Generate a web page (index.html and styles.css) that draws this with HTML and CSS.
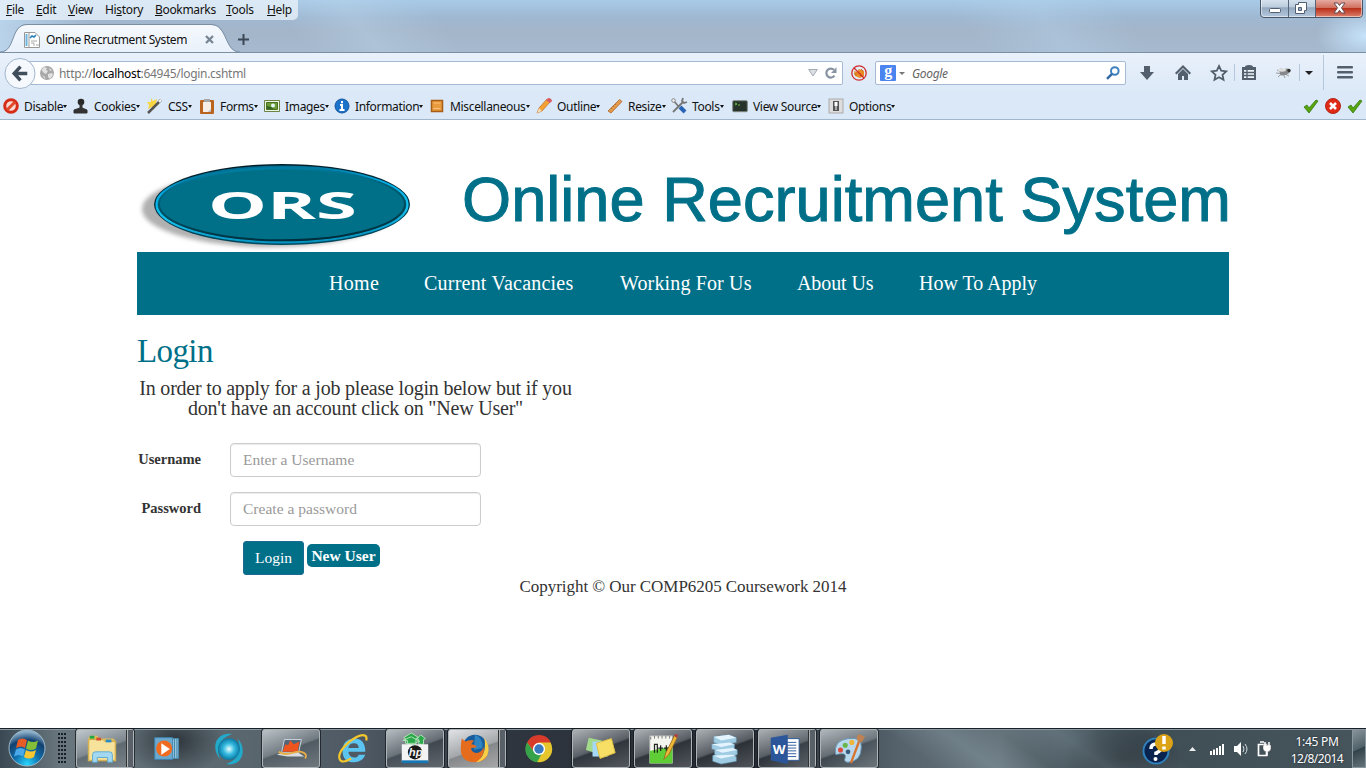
FILE: index.html
```
<!DOCTYPE html>
<html lang="en">
<head>
<meta charset="utf-8">
<title>Online Recrutment System</title>
<link rel="stylesheet" href="styles.css">
</head>
<body>
<div class="screen">
<header class="browser">
  <div class="titlebar">
    <div class="menubar">
      <span class="m1"><u>F</u>ile</span><span class="m2"><u>E</u>dit</span><span class="m3"><u>V</u>iew</span><span class="m4">Hi<u>s</u>tory</span><span class="m5"><u>B</u>ookmarks</span><span class="m6"><u>T</u>ools</span><span class="m7"><u>H</u>elp</span>
    </div>
    <svg class="winctl" width="104" height="20" viewBox="0 0 104 20">
      <defs>
        <linearGradient id="wg" x2="0" y2="1"><stop offset="0" stop-color="#dce8f3"/><stop offset=".45" stop-color="#bdcddd"/><stop offset=".5" stop-color="#94a9bf"/><stop offset="1" stop-color="#b5cadf"/></linearGradient>
        <linearGradient id="wr" x2="0" y2="1"><stop offset="0" stop-color="#e5aaa0"/><stop offset=".45" stop-color="#d1705f"/><stop offset=".5" stop-color="#b9301b"/><stop offset="1" stop-color="#dc806b"/></linearGradient>
      </defs>
      <path d="M.5 -2V14Q.5 17.500 4 17.500H99Q102.500 17.500 102.500 14V-2z" fill="url(#wg)" stroke="#475669"/>
      <path d="M56 0H102V14Q102 17 99 17H56z" fill="url(#wr)"/>
      <path d="M1.500 0V13Q1.500 16.500 4 16.500H99Q101.500 16.500 101.500 13V0" fill="none" stroke="#fff" opacity=".5"/>
      <path d="M28.500 0V17M55.500 0V17" stroke="#56657a"/>
      <rect x="9.500" y="8.500" width="11" height="4" rx="1" fill="#fff" stroke="#525f70"/>
      <path d="M38.500 2.500H46.500V10.500H44.500V13.500H35.500V4.500H38.500zM38.500 7.500V10.500H41.500V7.500z" fill="#fff" fill-rule="evenodd" stroke="#525f70"/>
      <path d="M74 3h3.500l2 2.500 2-2.500H85l-3.500 4.800L85 13h-3.500l-2-2.700-2 2.700H74l3.500-5.200z" fill="#fff" stroke="#5f4b52"/>
    </svg>
    <div class="tabstrip">
      <svg class="tabshape" width="240" height="29" viewBox="0 0 240 29">
        <defs><linearGradient id="tg" x2="0" y2="1"><stop stop-color="#f5f9fd"/><stop offset="1" stop-color="#e8f0fa"/></linearGradient></defs>
        <path d="M0 28.500C16 28.500 10 1 27 1H211C228 1 224 28.500 240 28.500V29H0z" fill="url(#tg)"/>
        <path d="M0 28C16 28 10 .5 27 .5H211C228 .5 224 28 240 28" fill="none" stroke="#7a8ea4"/>
      </svg>
      <div class="tabrow">
        <svg width="16" height="16" viewBox="0 0 16 16"><path d="M.5 .5H11L15.500 5V15.500H.500z" fill="#fff" stroke="#999"/><path d="M2.500 2v12" stroke="#6cb4df" stroke-width="2"/><path d="M5 0v15" stroke="#999"/><path d="M6 6l2-2 2 1 2-2" stroke="#247bb6" stroke-width="1.500" fill="none"/><path d="M7 9h6M7 11h3v3M12 13h3" stroke="#aaa" fill="none"/></svg>
        <span class="tabtitle">Online Recrutment System</span>
        <svg class="tabx" width="9" height="9" viewBox="0 0 9 9"><path d="M1 1L8 8M8 1L1 8" stroke="#788593" stroke-width="2.300"/></svg>
        <svg class="plus" width="11" height="11" viewBox="0 0 11 11"><path d="M5.500 0V11M0 5.500H11" stroke="#3c4856" stroke-width="2"/></svg>
      </div>
    </div>
  </div>

  <div class="navtools">
    <svg class="back" width="32" height="33" viewBox="0 0 33 33"><circle cx="16.500" cy="16.500" r="15.500" fill="#f5f9fd" stroke="#9eb3c9"/><path d="M17 9.500L10.500 16.500L17 23.500M11 16.500H24" fill="none" stroke="#404d5a" stroke-width="3.500"/></svg>
    <div class="url">
      <svg class="globe" width="14" height="14" viewBox="0 0 14 14"><circle cx="7" cy="7" r="7" fill="#a8a8a8"/><path d="M1.500 4L4 1l3 1-1 2 2 1-2 3-2-1zM8 8l4-1 1 2-3 4-2-2zM9 2l3 2-2 1zM2 9l3 2v2" fill="#e2e2e2"/></svg>
      <span class="urltext">http://<b>localhost</b>:64945/login.cshtml</span>
      <svg class="drop" width="10" height="8" viewBox="0 0 10 8"><path d="M.7 .5H9.300L5 7z" fill="#dce0e5" stroke="#a1a9b3"/></svg>
      <svg class="reload" width="12" height="12" viewBox="0 0 12 12"><path d="M9.500 8.700A4.500 4.500 0 1 1 9 2.800" fill="none" stroke="#8793a1" stroke-width="2.200"/><path d="M11.500 .2V6H6z" fill="#8793a1"/></svg>
    </div>
    <svg class="bugoff" width="16" height="16" viewBox="0 0 16 16"><path d="M3 6l3 1 2-3 5 2v5l-4 2-5-2z" fill="#e98b20"/><path d="M3 9h3M10 4l2 2M9 10l3 2" stroke="#b8702c"/><circle cx="8" cy="8" r="7.200" fill="none" stroke="#d12c2c" stroke-width="1.300"/><path d="M3 3L13 13" stroke="#d12c2c" stroke-width="1.300"/></svg>
    <div class="search">
      <span class="gbox">g</span><i class="tri grey"></i><span class="google">Google</span>
      <svg width="14" height="14" viewBox="0 0 14 14"><circle cx="8.800" cy="5" r="3.800" fill="none" stroke="#3f80bf" stroke-width="2"/><path d="M6 7.800L1 12.800" stroke="#3168a6" stroke-width="2.500"/></svg>
    </div>
    <svg class="toolicons" width="227" height="38" viewBox="0 0 227 38">
      <g fill="#535f6c">
        <path d="M5 13h6v6h4l-7 8-7-8h4z"/>
        <path d="M36 20l8-8 8 8-1.500 1.500L44 15l-6.500 6.500z"/><path d="M39 21l5-5 5 5v6h-4v-4h-2v4h-4z"/>
        <path d="M103 14h3q0-2 4-2t4 2h3v13h-14z"/>
        <path d="M166 18h8l-4 4z" fill="#222"/>
        <rect x="198" y="13" width="16" height="2.600" rx="1"/><rect x="198" y="18" width="16" height="2.600" rx="1"/><rect x="198" y="23" width="16" height="2.600" rx="1"/>
      </g>
      <path d="M80 13l2.200 4.700 5 .6-3.700 3.500 1 5-4.500-2.500-4.500 2.500 1-5-3.700-3.500 5-.6z" fill="none" stroke="#535f6c" stroke-width="1.800"/>
      <path d="M105 17h10v8h-10z" fill="#eef4fb"/><path d="M105 19.500h10M105 22.500h10M108 17v8" stroke="#535f6c" stroke-width="1.300"/>
      <path d="M95.500 11v17M160.500 11v17M184.500 2v35" stroke="#b5c8db"/>
      <g stroke="#888"><path d="M138 17l12 6M139 24l8-7M142 15l4 10M137 20l11 1" fill="none" stroke-width=".8"/><ellipse cx="146" cy="19" rx="5" ry="2.500" transform="rotate(-20 146 19)" fill="#85888a"/><ellipse cx="143" cy="17" rx="4" ry="1.700" fill="#ddd" stroke="none"/><circle cx="150" cy="17.500" r="1.700" fill="#333" stroke="none"/></g>
    </svg>
  </div>

  <div class="devtools">
    <div class="dev"><svg viewBox="0 0 16 16"><circle cx="8" cy="8" r="6.300" fill="#f9dbd4" stroke="#d62d18" stroke-width="3"/><path d="M4 12L12 4" stroke="#e04a2b" stroke-width="3"/></svg><span>Disable</span><i class="tri"></i></div>
    <div class="dev"><svg viewBox="0 0 16 16"><circle cx="8" cy="4" r="3.300" fill="#292929"/><path d="M7 6h2v4l5 2v3H1v-3l6-2z" fill="#333" stroke="#333"/></svg><span>Cookies</span><i class="tri"></i></div>
    <div class="dev"><svg viewBox="0 0 16 16"><path d="M4 0l2 3 4-2-1 4 3 2-4 1-1 4-2-3-4 2 1-4-2-3 4 0z" fill="#f8d642"/><path d="M1 15L14 2" stroke="#555" stroke-width="2.500"/><path d="M12 4l2-2" stroke="#fff" stroke-width="2"/></svg><span>CSS</span><i class="tri"></i></div>
    <div class="dev"><svg viewBox="0 0 16 16"><rect x="1" y="2" width="14" height="14" rx="1" fill="#ba651f"/><path d="M4 4h8v10H4z" fill="#f6eee4"/><path d="M5 1h6v3H5z" fill="#a6a6a6"/><path d="M9 14l3-3v3z" fill="#b8bac4"/></svg><span>Forms</span><i class="tri"></i></div>
    <div class="dev"><svg viewBox="0 0 16 16"><path d="M.5 2.500h15v11H.5z" fill="#f2f4e8" stroke="#698443"/><path d="M2.500 4.500h11v7h-11z" fill="#6d9c36" stroke="#46721f"/><circle cx="9" cy="7.500" r="2" fill="#e9f4fa"/><path d="M3 11V8l4 1 3 2z" fill="#356623"/></svg><span>Images</span><i class="tri"></i></div>
    <div class="dev"><svg viewBox="0 0 16 16"><circle cx="8" cy="8" r="7" fill="#1a73c8" stroke="#1556a1"/><path d="M8 3v2.200M6 7h2v5M5.500 12h5" stroke="#fff" stroke-width="2" fill="none"/></svg><span>Information</span><i class="tri"></i></div>
    <div class="dev"><svg viewBox="0 0 16 16"><path d="M2.500 2.500h11v11h-11z" fill="#e99a3d" stroke="#a65e17" stroke-width="1.500"/><path d="M4.500 5h7M4.500 10.500h7" stroke="#ffc278"/></svg><span>Miscellaneous</span><i class="tri"></i></div>
    <div class="dev"><svg viewBox="0 0 16 16"><path d="M1 15l2-5 8-9 3 3-8 9z" fill="#f5a133" stroke="#b86d21" stroke-width=".7"/><path d="M1 15l2-5 3 3z" fill="#f5dcb6"/><path d="M11 1q2-2 4 0t0 3l-1 1-4-3z" fill="#d75e67"/></svg><span>Outline</span><i class="tri"></i></div>
    <div class="dev"><svg viewBox="0 0 16 16"><path d="M1 13L12.500 1.500l2.500 2L4 15z" fill="#e49a4b" stroke="#ad662b" stroke-width=".8"/><path d="M4 10l1 1M6 8l1 1M8 6l1 1" stroke="#b9742f"/></svg><span>Resize</span><i class="tri"></i></div>
    <div class="dev"><svg viewBox="0 0 16 16"><path d="M2 14L12 4M12 0l-1 3 2 2 3-1" stroke="#777" stroke-width="1.800" fill="none"/><path d="M2 2l6 7" stroke="#777" stroke-width="1.700"/><circle cx="2.500" cy="2.500" r="1.800" fill="#eee" stroke="#888"/><path d="M9 9l5 5" stroke="#2764b6" stroke-width="4"/></svg><span>Tools</span><i class="tri"></i></div>
    <div class="dev"><svg viewBox="0 0 16 16"><rect x=".7" y="2.700" width="14.600" height="11" rx="1" fill="#26332a" stroke="#7e8884"/><path d="M3 5l2 1-2 1M6 7h2" stroke="#6dc542" fill="none"/></svg><span>View Source</span><i class="tri"></i></div>
    <div class="dev"><svg viewBox="0 0 16 16"><rect x="1" y="1" width="14" height="14" fill="#ddd" stroke="#aaa"/><path d="M5 3h6v10H5z" fill="#555"/><path d="M6.500 4h3v4h-3z" fill="#fff"/><path d="M8 7v5" stroke="#fff"/></svg><span>Options</span><i class="tri"></i></div>
    <div class="checks">
      <svg viewBox="0 0 16 16"><path d="M1 9l3-2 2 3L13 2l2 1L6 15z" fill="#58a50e" stroke="#34780e" stroke-width=".8"/></svg>
      <svg viewBox="0 0 16 16"><circle cx="8" cy="8" r="7.500" fill="#df2b16" stroke="#b52417"/><path d="M5 5l6 6M11 5l-6 6" stroke="#fff" stroke-width="2.600"/></svg>
      <svg viewBox="0 0 16 16"><path d="M1 9l3-2 2 3L13 2l2 1L6 15z" fill="#58a50e" stroke="#34780e" stroke-width=".8"/></svg>
    </div>
  </div>
</header>

<main class="page">
  <svg class="banner" width="1096" height="92" viewBox="137 160 1096 92">
    <defs>
      <filter id="soft" x="-10%" y="-20%" width="120%" height="140%"><feGaussianBlur stdDeviation="2"/></filter>
      <linearGradient id="edge" x1=".4" x2=".6" y2="1"><stop stop-color="#001d26"/><stop offset=".5" stop-color="#04384a"/><stop offset="1" stop-color="#014a5f"/></linearGradient>
      <linearGradient id="rim" x1=".4" x2=".6" y2="1"><stop stop-color="#006c92"/><stop offset=".3" stop-color="#00aee5"/><stop offset=".6" stop-color="#16c4f0"/><stop offset="1" stop-color="#0792c0"/></linearGradient>
      <linearGradient id="rim2" x1=".4" x2=".6" y2="1"><stop stop-color="#007ea2"/><stop offset=".5" stop-color="#005266"/><stop offset="1" stop-color="#012e3c"/></linearGradient>
    </defs>
    <ellipse cx="270" cy="209" rx="128" ry="38" fill="#b0b0b0" filter="url(#soft)"/>
    <ellipse cx="282" cy="204.500" rx="128" ry="40.500" fill="url(#edge)"/>
    <ellipse cx="282" cy="204.500" rx="125.500" ry="37.800" fill="#007089" stroke="url(#rim)" stroke-width="2.200"/>
    <ellipse cx="282" cy="204.300" rx="123" ry="36" fill="#007089" stroke="url(#rim2)" stroke-width="2"/>
    <text class="ors" x="208" y="219" textLength="149" lengthAdjust="spacingAndGlyphs">ORS</text>
    <text class="brand" x="462" y="221" textLength="769" lengthAdjust="spacingAndGlyphs">Online Recruitment System</text>
  </svg>
  <nav class="sitenav"><a class="n1">Home</a><a class="n2">Current Vacancies</a><a class="n3">Working For Us</a><a class="n4">About Us</a><a class="n5">How To Apply</a></nav>
  <section class="login">
    <h1>Login</h1>
    <p class="intro"><span class="l1">In order to apply for a job please login below but if you</span><br><span class="l2">don't have an account click on "New User"</span></p>
    <form>
      <div class="field"><label>Username</label><input type="text" placeholder="Enter a Username"></div>
      <div class="field"><label>Password</label><input type="text" placeholder="Create a password"></div>
      <div class="actions"><button type="button" class="loginbtn">Login</button><a class="newuser">New User</a></div>
    </form>
  </section>
  <footer><span>Copyright © Our COMP6205 Coursework 2014</span></footer>
</main>

<div class="taskbar">
  <svg class="start" width="54" height="40" viewBox="0 0 54 40">
    <defs><radialGradient id="orb" cx=".5" cy=".95" r=".9"><stop stop-color="#27d7ff"/><stop offset=".4" stop-color="#1170ad"/><stop offset=".75" stop-color="#12406f"/><stop offset="1" stop-color="#8eb1cb"/></radialGradient></defs>
    <circle cx="27" cy="20" r="18" fill="url(#orb)" stroke="#9dbac9"/>
    <path d="M18 12q4-3 9 0l-2 8q-4-3-9 0z" fill="#e75c26"/><path d="M28 12.500q5 3 10 0l-2 8q-5 3-10 0z" fill="#84bd37"/><path d="M16 21.500q4-3 9 0l-2 7q-4-3-9 0z" fill="#4aa9e9"/><path d="M26 22q5 3 10 0l-2 7q-5 3-10 0z" fill="#fac732"/>
  </svg>
  <div class="grip"></div>
  <div class="apps">
    <div class="app open stack"><svg viewBox="0 0 36 36"><path d="M3 8l2-4h8l2 3h15l3 3v21H3z" fill="#e5bd58"/><path d="M4 8h15l2 2h11v20H4z" fill="#f7e29c" stroke="#cca848"/><path d="M5 4h5v3H5z" fill="#21a845"/><path d="M12 6h5v3h-5z" fill="#d84c2e"/><path d="M22 8h6v3h-6z" fill="#2b8cc7"/><path d="M8 32V24q0-3 3-3h15q3 0 3 3v8h-5v-5H13v5z" fill="#a4d8f1" stroke="#5caad0"/></svg></div>
    <div class="app"><svg viewBox="0 0 36 36"><path d="M7 7h23v21H7z" fill="#9bc9e0" stroke="#4a92ba"/><path d="M26 7v21M28.500 7v21" stroke="#397fa6"/><path d="M5 6h19v23H5z" fill="#6ba9cf" stroke="#3d84af"/><circle cx="15" cy="17.500" r="8.500" fill="#ef6b20"/><path d="M12 12v12l9-6z" fill="#fff"/></svg></div>
    <div class="app"><svg viewBox="0 0 36 36"><defs><radialGradient id="hp"><stop stop-color="#eaffff"/><stop offset=".5" stop-color="#38bce1"/><stop offset="1" stop-color="#0879a4"/></radialGradient></defs><path d="M21 2C4 0-2 17 9 29C3 17 8 7 21 2M15 34c17 3 23-16 12-27 5 13 1 22-12 27" fill="#22aacb"/><circle cx="18" cy="18" r="11.500" fill="url(#hp)"/></svg></div>
    <div class="app open"><svg viewBox="0 0 36 36"><path d="M11 8h18l-3 14H8z" fill="#526578" stroke="#d0dae2"/><path d="M12 13l3 1 2-5 4 4 6-3-2 11H9z" fill="#ee541d"/><path d="M3 24l5-2h18l6 4H14z" fill="#d8dde1"/><path d="M5 21c10 6 17-2 24 0q7 2 4 7" fill="none" stroke="#eaad47" stroke-width="2"/></svg></div>
    <div class="app"><svg viewBox="0 0 36 36"><path d="M31 21H13q1 6 6 6 4 0 5-3h7q-3 8-12 8-12 0-12-12T19 7q12 0 12 14M13 17h11q0-5-5-5t-6 5" fill="#5bc4f1" fill-rule="evenodd"/><path d="M16 28Q6 34 4 29 1 22 14 10.500 26 1 31 4q2 1 1 5" fill="none" stroke="#f4c72c" stroke-width="2.300"/></svg></div>
    <div class="app open"><svg viewBox="0 0 36 36"><path d="M8 12V7L6 6l8-5 8 5-3 1v5zM22 13V8l-2-1 4-4 5 4-2 1v5zM10 13V9L5 9l9-4 9 5-4 1v4z" fill="#2aa84a" stroke="#b1e1b8"/><path d="M4 13h28v19H4z" fill="#f4f4f4"/><path d="M4 30h28v3H4z" fill="#1677b4"/><circle cx="18" cy="21.500" r="7.500" fill="#191919"/><text class="hptext" x="11.500" y="25">hp</text></svg></div>
    <div class="app open stack bright"><svg viewBox="0 0 36 36"><circle cx="19" cy="16" r="13" fill="#175d9e"/><path d="M19 3q9 3 8 14l-9 2z" fill="#2f83c0"/><path d="M5 7l4 3q4-2 9-1l-3 4q4 0 6 3-3 1-6 1 0 4 4 5 7 1 9-6 2 8-4 12 8-3 8-14 4 17-13 18Q4 32 4 18q0-6 1-11z" fill="#e66c1d"/><path d="M29 6q7 10 3 19-5 7-12 7 12-7 9-26" fill="#f9cf46"/></svg></div>
    <div class="app"><svg viewBox="0 0 36 36"><circle cx="18" cy="18" r="14" fill="#e6c62d"/><path d="M5.500 11A14 14 0 0 1 30.500 11H18L12 20z" fill="#d83b2b"/><path d="M5.500 11A14 14 0 0 0 16 32l6-11-10-1z" fill="#36a34a"/><circle cx="18" cy="18" r="6.500" fill="#fff"/><circle cx="18" cy="18" r="5" fill="#3979bf"/></svg></div>
    <div class="app open"><svg viewBox="0 0 36 36"><path d="M5 6l14 3-4 14-13-4z" fill="#a2d98b"/><path d="M9 10h16v16H9z" fill="#a4d8f4"/><path d="M13 12l16-5 4 15-16 6z" fill="#f7df66" stroke="#dfbf42"/></svg></div>
    <div class="app open"><svg viewBox="0 0 36 36"><path d="M4 4h24v29H4z" fill="#f5f5f0" stroke="#aaa"/><path d="M4 20l24-5v18H4z" fill="#5fcd35"/><path d="M5 5v3M9 4v3M13 4v3M17 4v3M21 4v3M25 4v3" stroke="#777"/><path d="M9 22V13h3v9M13 17h5M15.500 14v6M19 17h5M21.500 14v6" stroke="#222" stroke-width="1.300" fill="none"/><path d="M19 29l2-7 9-18 3 2-9 18z" fill="#edb839" stroke="#985e18" stroke-width=".8"/><path d="M30 4l3 2 1-3-3-1z" fill="#b63e3f"/></svg></div>
    <div class="app open"><svg viewBox="0 0 36 36"><g fill="#9fcbe3" stroke="#628fab" stroke-width=".6"><path d="M5 25l16-2 9 3v5l-16 3-9-3z"/><path d="M7 19l16-3 8 3v5l-16 3-8-3z"/><path d="M4 13l15-3 9 3v5l-14 3-10-3z"/><path d="M6 5l16-2 8 3v5l-16 3-8-3z"/></g><path d="M6 5l16-2 8 3-16 3zM4 13l10 3 14-3-5-2zM7 19l8 3 16-3-5-2zM5 25l9 3 16-3-5-1z" fill="#e3f4ff"/></svg></div>
    <div class="app open stack"><svg viewBox="0 0 36 36"><path d="M17 7h17v23H17z" fill="#fff" stroke="#2b579a"/><path d="M20 11h11M20 14h11M20 17h11M20 20h11M20 23h11M20 26h11" stroke="#2b579a"/><path d="M4 6l18-3v31L4 30z" fill="#2b579a"/><text class="wtext" x="6" y="23">W</text></svg></div>
    <div class="app open"><svg viewBox="0 0 36 36"><path d="M4 24Q1 9 17 7q15-2 14 9 0 15-14 16-5 0-3-5 1-4-3-4-4 0-7 1" fill="#b8d9ed" stroke="#6995b2"/><circle cx="9" cy="19" r="2.700" fill="#d94c3e"/><circle cx="14" cy="14" r="2.700" fill="#69b74c"/><circle cx="21" cy="11" r="2.700" fill="#edb638"/><circle cx="17" cy="21" r="2.500" fill="#395c7a"/><path d="M20 33L29 9" stroke="#d77430" stroke-width="2.500"/><path d="M26 6l2-4 7 3-3 5-4 2z" fill="#bf8353"/></svg></div>
  </div>
  <div class="tray">
    <svg width="140" height="40" viewBox="0 0 140 40">
      <circle cx="16" cy="22" r="12.500" fill="#09234e" stroke="#2f80bb" stroke-width="2"/><path d="M11 20q0-5 5-5t5 4q0 3-5 5v2" fill="none" stroke="#fff" stroke-width="3.500"/><circle cx="15.500" cy="30" r="2" fill="#fff"/>
      <circle cx="24" cy="14" r="9" fill="#dba315"/><path d="M24 7v8M24 17.500v3" stroke="#fff" stroke-width="3.500"/>
      <path d="M49 22l3.500-4 3.500 4z" fill="#eee"/>
      <path d="M70 22h2v4h-2zM73 20.500h2V26h-2zM76 19h2v7h-2zM79 17h2v9h-2zM82 15h2v11h-2z" fill="#fff"/>
      <path d="M94 17h3l4-4v14l-4-4h-3z" fill="#fff"/><path d="M103 17q2 3 0 6M105 15q4 5 0 10" stroke="#d4dde1" fill="none"/>
      <path d="M118.500 15.500h8v11h-8zM120 13h4" fill="none" stroke="#fff" stroke-width="1.700"/><path d="M123 16h8v4q-1 3-4 3t-4-3z" fill="#fff" stroke="#555" stroke-width=".5"/><path d="M125 13v4M129 13v4M127 22v5" stroke="#fff" stroke-width="1.500"/>
    </svg>
    <div class="clock"><span>1:45 PM</span><span class="date">12/8/2014</span></div>
    <div class="showdesk"></div>
  </div>
</div>
</div>
</body>
</html>
```
FILE: styles.css
```
* { box-sizing: border-box; }
body { margin: 0; background: #fff; }
svg { display: block; flex: none; overflow: visible; }
.screen { width: 1366px; height: 768px; overflow: hidden; display: flex; flex-direction: column; }

/* Browser chrome */
.browser { height: 120px; flex: none; font: 12px/20px "Noto Sans", "Open Sans", sans-serif; letter-spacing: -.33px; color: #111; }
.titlebar { position: relative; height: 53px; border-bottom: 1px solid #7a8ea4; overflow: hidden;
  background: radial-gradient(50px 28px at 1366px 36px, #c5e3fb, transparent), linear-gradient(52deg, transparent 22%, rgba(190,215,236,.35) 27%, transparent 33%, transparent 70%, rgba(180,210,235,.4) 76%, transparent 82%), linear-gradient(90deg, rgba(190,218,242,.8), transparent 90px), linear-gradient(#a8cae7, #9fb9d3 32%, #a3b5c9 55%, #a6b9ce); }
.menubar { width: 298px; height: 20px; background: rgba(233,242,250,.78); border-radius: 0 0 5px 0; display: flex; padding-left: 6px; line-height: 20px; }
.menubar span { flex: none; white-space: nowrap; }
.menubar u { text-underline-offset: 1px; }
.m1 { width: 30px; } .m2 { width: 32px; } .m3 { width: 37px; } .m4 { width: 50px; } .m5 { width: 71px; } .m6 { width: 41px; }
.winctl { position: absolute; right: 2px; top: 0; }
.tabstrip { position: absolute; left: 0; top: 24px; }
.tabrow { position: absolute; left: 24px; top: 1px; height: 29px; display: flex; align-items: center; }
.tabtitle { width: 159px; margin-left: 6px; white-space: nowrap; letter-spacing: -.4px; }
.plus { margin-left: 24px; }
.navtools { height: 38px; display: flex; align-items: center; padding-left: 4px; background: linear-gradient(#e9f1fb, #dce9f7); }
.back { position: relative; z-index: 1; margin-top: 2px; }
.url { width: 817px; height: 24px; margin: 2px 0 0 -10px; border: 1px solid #a4bbd3; border-radius: 2px; background: #fff; display: flex; align-items: center; padding: 0 5px 0 13px; }
.urltext { margin: 2px 0 0 5px; color: #777; letter-spacing: -.3px; }
.urltext b { font-weight: 400; color: #000; }
.drop { margin-left: auto; margin-right: 7px; }
.bugoff { margin: 2px 8px 0 8px; }
.search { width: 251px; height: 24px; margin-top: 2px; border: 1px solid #a4bbd3; border-radius: 2px; background: #fff; display: flex; align-items: center; padding: 0 5px 0 4px; }
.gbox { width: 16px; height: 16px; background: #4a84ee; border-radius: 1px; color: #fff; font: 700 16px/11px "Liberation Serif", serif; text-align: center; }
.tri { width: 0; height: 0; border: 2.5px solid transparent; border-top: 3px solid #111; border-bottom: 0; }
.tri.grey { border-width: 3.5px 3.5px 0; border-top-color: #777; margin: 0 7px 0 3px; }
.google { flex: 1; font-style: italic; color: #666; margin-top: 2px; }
.toolicons { margin-left: 13px; }
.devtools { height: 29px; background: #dae8f7; border-bottom: 1px solid #9fb6cb; display: grid; grid-template-columns: 70px 74px 52px 65px 70px 95px 107px 71px 64px 61px 96px 78px 1fr; align-items: center; padding: 2px 0 0 3px; }
.dev { display: flex; align-items: center; white-space: nowrap; }
.dev svg, .checks svg { width: 16px; height: 16px; }
.dev span { margin: 1px 0 0 5px; }
.checks { display: flex; gap: 6px; justify-content: flex-end; padding-right: 3px; }

/* Website */
.page { flex: 1; width: 1092px; margin: 0 auto; font-family: Georgia, "Liberation Serif", serif; color: #333; }
.banner { margin-top: 40px; }
.ors { font: 700 38px "Open Sans", sans-serif; fill: #fff; }
.brand { font: 63px "Liberation Sans", sans-serif; fill: #007089; stroke: #007089; stroke-width: 1px; }
.sitenav { height: 63px; background: #007089; display: flex; padding-left: 192px; color: #fff; font-size: 20px; line-height: 63px; white-space: nowrap; }
.n1 { width: 95px; letter-spacing: .3px; } .n2 { width: 196px; letter-spacing: .22px; } .n3 { width: 177px; letter-spacing: .15px; } .n4 { width: 122px; letter-spacing: -.1px; } .n5 { letter-spacing: -.03px; }
.login { width: 437px; padding-top: 20px; }
.login h1 { margin: 0; color: #007089; font-weight: 400; font-size: 33px; line-height: 33px; letter-spacing: -.6px; }
.intro { margin: 10px 0 25px; font-size: 20px; line-height: 20px; text-align: center; white-space: nowrap; letter-spacing: -.21px; }
.field { display: flex; align-items: center; height: 34px; margin-bottom: 15px; }
.field label { width: 64px; text-align: right; font-size: 14.5px; font-weight: 700; margin-right: 29px; padding-bottom: 2px; white-space: nowrap; }
.field input { width: 251px; height: 34px; border: 1px solid #ccc; border-radius: 4px; padding: 0 12px; font: 15.5px Georgia, "Liberation Serif", serif; box-shadow: inset 0 1px 1px rgba(0,0,0,.08); letter-spacing: .02px; }
.field input::placeholder { color: #999; }
.actions { display: flex; align-items: flex-start; gap: 3px; padding-left: 106px; height: 34px; color: #fff; }
.loginbtn { width: 61px; height: 34px; border: 1px solid #1b6a93; border-radius: 3px; background: #007089; color: #fff; font: 15.5px Georgia, "Liberation Serif", serif; padding: 0; }
.newuser { margin-top: 3px; width: 73px; height: 23px; border-radius: 5px; background: #007089; font-size: 15.5px; line-height: 24px; font-weight: 700; text-align: center; white-space: nowrap; }
footer { text-align: center; font-size: 17px; line-height: 23px; letter-spacing: -.05px; }

/* Taskbar */
.taskbar { height: 40px; flex: none; display: flex; position: relative; border-top: 1px solid #192027; box-shadow: inset 0 1px #8b9ba4;
  background: linear-gradient(35deg, transparent 66%, rgba(150,171,180,.3) 70%, transparent 74%, rgba(140,160,170,.3) 78%, transparent 84%), radial-gradient(50px 34px at 175px 12px, rgba(20,25,30,.65), transparent), radial-gradient(60px 34px at 1122px 30px, rgba(20,24,28,.6), transparent), linear-gradient(90deg, #394852, #69767e 60px, #59666e 250px, #4e5963 360px, #30363f 500px, #252a32 750px, #56636c 900px, #65737b 1000px, #3e4c54 1100px, #46545c); }
.grip { width: 8px; height: 31px; margin: 4px 14px 0 4px; background: radial-gradient(circle at 1px 1px, #182027 1px, transparent 1.4px); background-size: 3px 4px; }
.start { margin-top: -1px; }
.apps { display: flex; gap: 4px; margin-left: -4px; }
.app { width: 58px; height: 39px; display: flex; justify-content: center; align-items: center; position: relative; }
.app svg { width: 34px; height: 34px; }
.open { border: 1px solid #aeb5b8; border-radius: 3px; box-shadow: 0 0 0 1px rgba(20,24,30,.75); background: linear-gradient(160deg, rgba(240,245,247,.65), rgba(160,166,170,.4) 48%, rgba(70,75,80,.2) 52%, rgba(180,180,180,.3)); }
.bright { background: linear-gradient(160deg, #e1e3e6, #a4a7aa 50%, #85888b 52%, #aaa); }
.stack { padding-right: 6px; }
.stack::after { content: ""; position: absolute; right: 0; top: 0; width: 5px; height: 37px; background: #596067; border-left: 1px solid #aeb5b8; box-shadow: -1px 0 #333; }
.hptext { font: italic 700 12px "Liberation Sans", sans-serif; fill: #f4f4f4; }
.wtext { font: 700 14px "Open Sans", sans-serif; fill: #fff; }
.tray { margin-left: auto; display: flex; color: #fff; }
.clock { width: 72px; height: 40px; display: flex; flex-direction: column; align-items: center; padding: 4px 0 0 2px; font: 12px/17px "Noto Sans", sans-serif; letter-spacing: -.3px; text-shadow: 0 0 2px #182027; }
.showdesk { width: 14px; height: 39px; border: 1px solid #89979e; background: linear-gradient(155deg, #87939a, #516169 50%, #33434a 52%, #65737a); }
.date { letter-spacing: -.5px; }
```
